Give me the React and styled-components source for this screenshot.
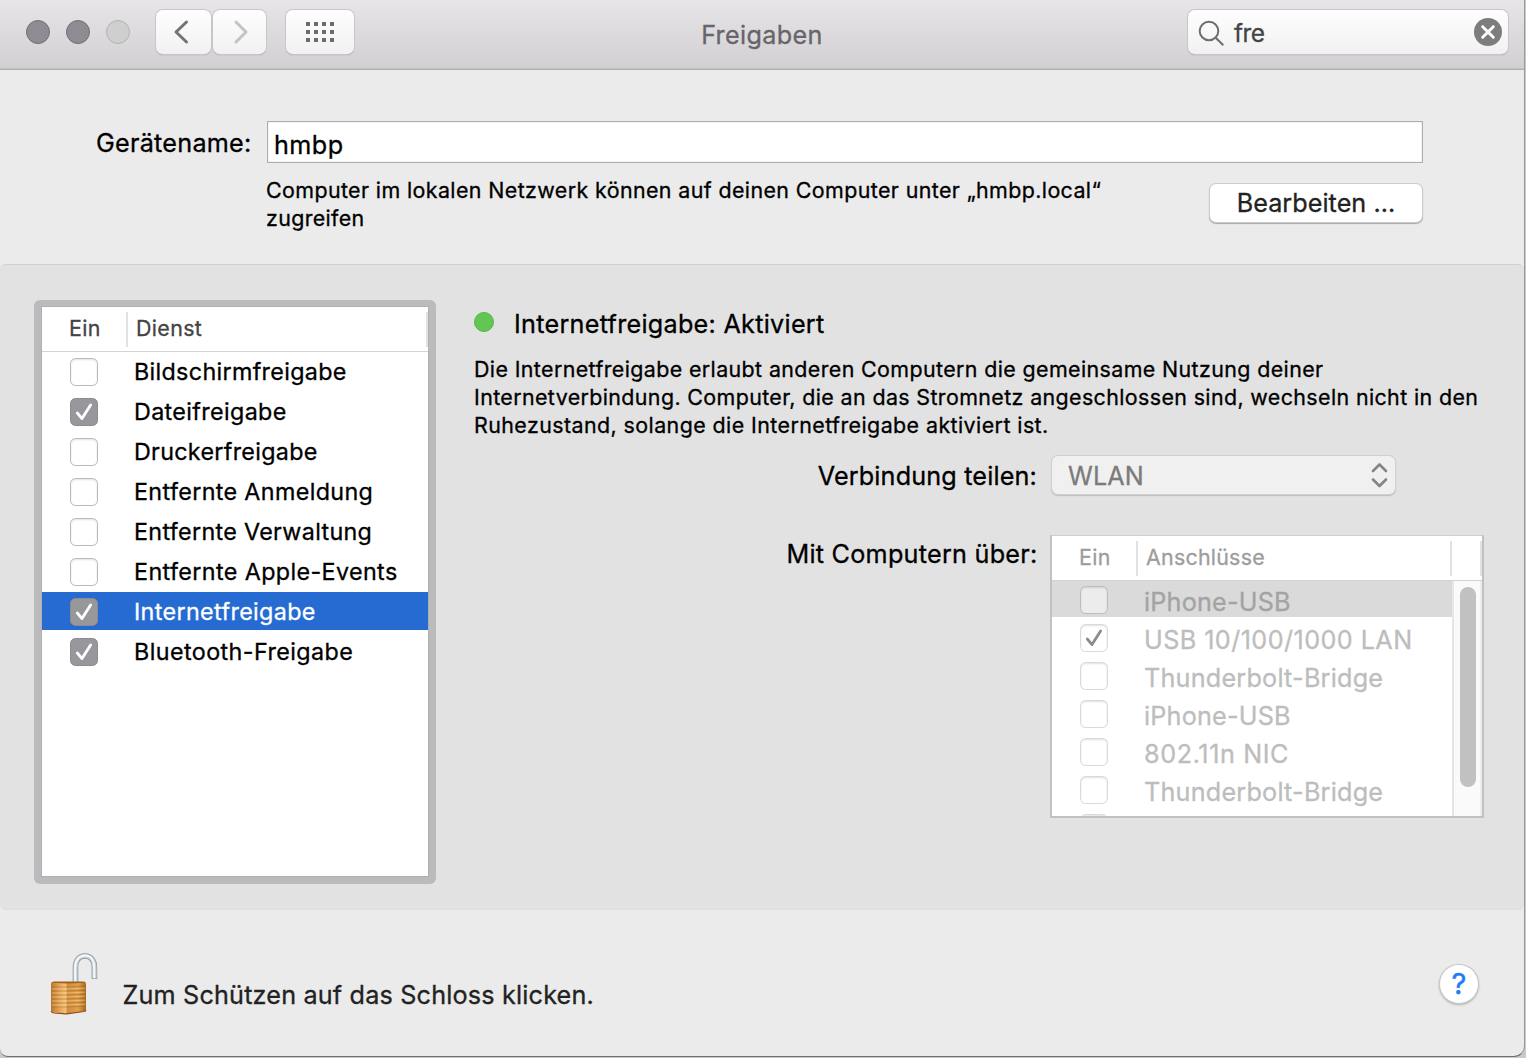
import React from 'react';
import styled, { createGlobalStyle } from 'styled-components';

const GlobalStyle = createGlobalStyle`
  * { box-sizing: border-box; }
  body {
    margin: 0;
    background: #c9c9c9;
    font-family: Inter, "Liberation Sans", sans-serif;
    color: #000;
    overflow: hidden;
  }
`;

const Window = styled.main`
  display: flex;
  flex-direction: column;
  width: 1525px;
  height: 1057px;
  background: #ebebeb;
  border-right: 1px solid #999;
  border-bottom: 1px solid #6e6e6e;
  border-radius: 0 0 11px 8px;
  overflow: hidden;
`;

const Text = styled.span`
  display: block;
  white-space: pre;
  font-size: ${(p) => p.$size || 25.2}px;
  letter-spacing: ${(p) => p.$track || 0}px;
  line-height: ${(p) => p.$line || 30}px;
  color: ${(p) => p.$color || 'inherit'};
  -webkit-text-stroke: 0.3px currentColor;
`;

/* Title bar */

const TitleBar = styled.header`
  display: grid;
  grid-template-columns: 1fr auto 1fr;
  height: 70px;
  padding: 10px 16px 0 26px;
  background: linear-gradient(#e7e5e8, #d1cfd2);
  border-bottom: 1px solid #afadb0;
  box-shadow: inset 0 -1px #c4c2c5;
  border-top-left-radius: 3px;
`;

const Controls = styled.div`
  display: flex;
  align-items: flex-start;
`;

const Lights = styled.div`
  display: flex;
  gap: 16px;
  padding-top: 10px;
  margin-right: 26px;
`;

const Light = styled.span`
  width: 24px;
  height: 24px;
  border-radius: 50%;
  background: ${(p) => (p.$off ? '#cecfce' : '#8e8c92')};
  border: 1px solid ${(p) => (p.$off ? '#b1b2b1' : '#717074')};
`;

const ToolButton = styled.button`
  display: flex;
  align-items: center;
  justify-content: center;
  width: ${(p) => p.$width}px;
  height: 44px;
  margin: 0 ${(p) => p.$gap || 0}px 0 0;
  padding: 0 ${(p) => p.$right || 0}px 0 ${(p) => p.$left || 0}px;
  border: 0;
  border-radius: 7px;
  background: linear-gradient(#fefefe, #f1f1f1);
  box-shadow: 0 0 0 1px #c8c6c9, 0 1px 1px 0 #858387;
`;

const Title = styled.h1`
  margin: 0 10px 0 0;
  padding-top: 10px;
  font-weight: 400;
`;

const Search = styled.div`
  display: flex;
  justify-self: end;
  width: 320px;
  height: 44px;
  padding-left: 10px;
  border-radius: 7px;
  background: linear-gradient(#fefefe, #f1f1f1);
  box-shadow: 0 0 0 1px #c8c6c9, 0 1px 1px 0 #858387;

  svg:first-child { margin: 10px 9px 0 0; }
  svg:last-child { margin: 8px 6px 0 auto; }
  ${Text} { padding-top: 8px; }
`;

/* Computer name */

const NameSection = styled.section`
  display: grid;
  grid-template-columns: 171px 1156px;
  height: 194px;
  padding: 51px 0 0 96px;
`;

const NameBody = styled.div``;

const Field = styled.div`
  height: 42px;
  padding: 8px 0 0 6px;
  background: #fff;
  border: 1px solid #adadad;
  box-shadow: inset 0 0 0 1px #f3f3f3;
`;

const Hint = styled.div`
  display: flex;
  justify-content: space-between;
  padding-top: 13px;
  margin-left: -1px;
`;

const EditButton = styled.button`
  height: 38px;
  width: 212px;
  margin: 8px 1px 0 0;
  padding: 0;
  border: 0;
  border-radius: 6px;
  background: #fff;
  font-family: inherit;
  color: #222;
  box-shadow: 0 0 0 1px #cbcbcb, 0 1px 1px 1px #a9a9a9;
`;

/* Sharing panel */

const Panel = styled.section`
  display: flex;
  height: 646px;
  padding: 35px 0 0 34px;
  background: #e2e2e2;
  border-top: 1px solid #d0d0d0;
  border-bottom: 1px solid #dedede;
  border-radius: 6px;
`;

const FocusRing = styled.div`
  flex: none;
  width: 402px;
  height: 584px;
  padding: 7px 8px 8px;
  border-radius: 6px;
  background: #bbbbbd;
`;

const ServiceList = styled.div`
  height: 569px;
  background: #fff;
  box-shadow: 0 0 0 1px #b0b0b2;
  overflow: hidden;
`;

const TableHead = styled.div`
  display: flex;
  align-items: center;
  height: 45px;
  border-bottom: 1px solid #d3d3d3;
  color: ${(p) => p.$color || '#444'};
`;

const HeadCell = styled.div`
  flex: ${(p) => (p.$width ? 'none' : 1)};
  width: ${(p) => p.$width || 'auto'}px;
  height: 35px;
  padding: ${(p) => p.$top ?? 2}px 0 0 ${(p) => p.$pad || 0}px;
  border-right: 2px solid #e2e2e2;
`;

const Row = styled.div`
  display: flex;
  height: ${(p) => p.$height}px;
  margin-bottom: 2px;
  padding: ${(p) => p.$top}px 0 0 28px;
  background: ${(p) => p.$fill || 'transparent'};
  color: ${(p) => p.$color};

  ${Text} { margin-left: ${(p) => p.$indent}px; }
`;

const CheckBox = styled.span`
  display: flex;
  align-items: center;
  justify-content: center;
  flex: none;
  width: 28px;
  height: 28px;
  border-radius: 5.5px;
  border: 1px solid ${(p) => (p.$on ? '#8c8b90' : p.$dim || '#b9b9b9')};
  background: ${(p) => (p.$on ? '#98979c' : p.$fill || '#fff')};
  box-shadow: ${(p) => (p.$on ? 'none' : 'inset 0 1px 2px rgba(0,0,0,.12)')};
`;

const Detail = styled.div`
  width: 1012px;
  margin-left: 38px;
  padding-top: 8px;
`;

const Status = styled.div`
  display: flex;
  align-items: flex-start;
  padding-bottom: 15px;
`;

const Dot = styled.span`
  width: 20px;
  height: 20px;
  margin: 4px 20px 0 0;
  border-radius: 50%;
  background: #62c554;
  border: 1px solid #58b54b;
`;

const Form = styled.div`
  display: grid;
  grid-template-columns: 565px 434px;
  column-gap: 11px;
  row-gap: 41px;
  padding-top: 16px;
`;

const FieldLabel = styled.div`
  display: flex;
  justify-content: flex-end;
  padding: ${(p) => p.$top}px ${(p) => p.$right}px 0 0;
`;

const Select = styled.div`
  display: flex;
  justify-content: space-between;
  width: 343px;
  height: 38px;
  margin: 1px 0 0 2px;
  padding: 5px 7px 0 16px;
  border-radius: 6px;
  background: #f0f0f0;
  box-shadow: 0 0 0 1px #d0d0d0, 0 1px 1px 1px #bdbdbd;

  svg { margin-top: 1px; }
`;

const PortTable = styled.div`
  height: 283px;
  background: #fff;
  border: 2px solid #c1c1c1;
  border-top: 1px solid #cfcfcf;
  overflow: hidden;
`;

const PortBody = styled.div`
  display: flex;
  height: 235px;
`;

const PortRows = styled.div`
  width: 400px;
  overflow: hidden;
`;

const ScrollTrack = styled.div`
  width: 30px;
  padding: 6px 0 0 6px;
  background: #fafafa;
  border-left: 2px solid #e6e6e6;
  border-right: 2px solid #ededed;
`;

const Thumb = styled.div`
  width: 16px;
  height: 200px;
  border-radius: 8px;
  background: #c1c1c1;
`;

/* Footer */

const Footer = styled.footer`
  display: flex;
  align-items: flex-start;
  padding: 42px 46px 0 50px;

  ${Text} { margin: 28px auto 0 24.5px; }
`;

const HelpButton = styled.button`
  width: 38px;
  height: 38px;
  margin-top: 13px;
  padding: 0;
  border: 0;
  border-radius: 50%;
  background: #fff;
  color: #1d7cf8;
  font: 400 29px/38px Inter, "Liberation Sans", sans-serif;
  -webkit-text-stroke: 0.5px currentColor;
  box-shadow: 0 0 0 1px #c9c9c9, 0 1px 2px 1px #b0b0b0;
`;

const Chevron = ({ flip, color }) => (
  <svg width="16" height="26" viewBox="0 0 16 26" fill="none" stroke={color} strokeWidth="3" strokeLinecap="round" strokeLinejoin="round">
    <path d={flip ? 'M3 3 13 13 3 23' : 'M13.5 3 3 13 13.5 23'} />
  </svg>
);

const DotGrid = () => (
  <svg width="28" height="20" fill="#6b6b6b" shapeRendering="crispEdges">
    {[0, 8, 16].map((y) => [0, 8, 16, 24].map((x) => <rect key={`${x}-${y}`} x={x} y={y} width="4" height="4" />))}
  </svg>
);

const Magnifier = () => (
  <svg width="27" height="27" fill="none" stroke="#6d6d6d" strokeWidth="2">
    <circle cx="11" cy="11" r="9.3" />
    <path d="M17.7 17.7 25.3 25.3" />
  </svg>
);

const ClearIcon = () => (
  <svg width="28" height="28">
    <circle cx="14" cy="14" r="14" fill="#7d7d7d" />
    <path d="M8.7 8.7 19.3 19.3M19.3 8.7 8.7 19.3" stroke="#fcfcfc" strokeWidth="3" strokeLinecap="round" />
  </svg>
);

const Check = ({ color = '#fff' }) => (
  <svg width="18" height="18" viewBox="0 0 18 18" fill="none" stroke={color} strokeWidth="2.8" strokeLinecap="round" strokeLinejoin="round">
    <path d="M2.3 10 7 15.6 15.6 2" />
  </svg>
);

const UpDown = () => (
  <svg width="17" height="26" fill="none" stroke="#858585" strokeWidth="2.6" strokeLinecap="round" strokeLinejoin="round">
    <path d="M2 9 8.5 2.5 15 9M2 17.5 8.5 24 15 17.5" />
  </svg>
);

const Padlock = () => (
  <svg width="48" height="64" viewBox="0 0 48 64">
    <defs>
      <linearGradient id="brassFront" x1="0" x2="1" y1="0" y2="0">
        <stop offset="0" stopColor="#b9782c" />
        <stop offset=".5" stopColor="#e3a252" />
        <stop offset="1" stopColor="#f6c987" />
      </linearGradient>
      <linearGradient id="brassSide" x1="0" x2="1" y1="0" y2="0">
        <stop offset="0" stopColor="#d08d3c" />
        <stop offset=".6" stopColor="#dfa04c" />
        <stop offset="1" stopColor="#a9681f" />
      </linearGradient>
    </defs>
    <path d="M25.5 30V15.5C25.5 8.2 29.4 4 35 4S44.4 8.2 44.4 15.5V27" fill="none" stroke="#89959c" strokeWidth="5.6" />
    <path d="M25.5 30V15.5C25.5 8.2 29.4 4 35 4S44.4 8.2 44.4 15.5V26.4" fill="none" stroke="#c5d0d6" strokeWidth="4.2" />
    <path d="M25.2 30V15.5C25.2 8 29.2 3.5 35 3.5S44.2 8.2 44.2 15.5V26" fill="none" stroke="#f4f8fa" strokeWidth="2" />
    <path d="M1 31.5Q1 30 3 29.7L17 30.2V61.8L3 60.6Q1 60.4 1 59Z" fill="url(#brassFront)" />
    <path d="M16.5 30.2 34 30Q36 30.2 36 32V57.5Q36 58.8 34.5 59.2L16.5 61.8Z" fill="url(#brassSide)" />
    <path d="M1.5 30.8Q3 29.6 6 29.6H33Q35 29.6 35.6 30.8L17 31.5Z" fill="#a15f1d" />
    {[35, 39, 43, 47, 51, 55].map((y) => (
      <path key={y} d={`M1 ${y}H16.5L36 ${y - 0.8}`} fill="none" stroke="#a5621b" strokeOpacity=".45" strokeWidth="1.1" />
    ))}
    {[37, 41, 45, 49, 53].map((y) => (
      <path key={y} d={`M2 ${y}H16.5L35 ${y - 0.8}`} fill="none" stroke="#ffdca3" strokeOpacity=".45" strokeWidth="1" />
    ))}
    <path d="M1 59.4Q1.5 60.7 4 61L16.5 61.9 34 59.5Q35.6 59.2 36 58" fill="none" stroke="#8f4a17" strokeWidth="1.1" />
  </svg>
);

const services = [
  { name: 'Bildschirmfreigabe', track: 0.33 },
  { name: 'Dateifreigabe', track: 0.36 },
  { name: 'Druckerfreigabe', track: 0.3 },
  { name: 'Entfernte Anmeldung', track: 0.36 },
  { name: 'Entfernte Verwaltung', track: 0.32 },
  { name: 'Entfernte Apple-Events', track: 0.39 },
  { name: 'Internetfreigabe', track: 0.36, selected: true },
  { name: 'Bluetooth-Freigabe', track: 0.42 },
];

const enabled = new Set(['Dateifreigabe', 'Internetfreigabe', 'Bluetooth-Freigabe']);

const ports = [
  { name: 'iPhone-USB', track: 0.2, selected: true },
  { name: 'USB 10/100/1000 LAN', track: 0.43, on: true },
  { name: 'Thunderbolt-Bridge', track: 0.22 },
  { name: 'iPhone-USB', track: 0.2 },
  { name: '802.11n NIC', track: 0.6 },
  { name: 'Thunderbolt-Bridge', track: 0.22 },
  { name: '', track: 0 },
];

export default function App() {
  return (
    <>
      <GlobalStyle />
      <Window>
        <TitleBar>
          <Controls>
            <Lights>
              <Light />
              <Light />
              <Light $off />
            </Lights>
            <ToolButton $width={55} $gap={2} $right={6}><Chevron color="#737373" /></ToolButton>
            <ToolButton $width={53} $gap={20} $left={3}><Chevron flip color="#c3c3c3" /></ToolButton>
            <ToolButton $width={68}><DotGrid /></ToolButton>
          </Controls>
          <Title><Text $track={0.35} $color="#676569">Freigaben</Text></Title>
          <Search>
            <Magnifier />
            <Text $size={24.4} $track={-0.5} $color="#444">fre</Text>
            <ClearIcon />
          </Search>
        </TitleBar>

        <NameSection>
          <Text $track={0.25} $line={44}>Gerätename:</Text>
          <NameBody>
            <Field><Text $track={0.44}>hmbp</Text></Field>
            <Hint>
              <div>
                <Text $size={21.4} $track={0.4} $line={28}>Computer im lokalen Netzwerk können auf deinen Computer unter „hmbp.local“</Text>
                <Text $size={21.4} $track={0.36} $line={28}>zugreifen</Text>
              </div>
              <EditButton><Text $track={0.04}>Bearbeiten ...</Text></EditButton>
            </Hint>
          </NameBody>
        </NameSection>

        <Panel>
          <FocusRing>
            <ServiceList>
              <TableHead>
                <HeadCell $width={86} $pad={27} $top={1}><Text $size={21.4} $track={0.4}>Ein</Text></HeadCell>
                <HeadCell $pad={8} $top={1}><Text $size={21.4} $track={0.36}>Dienst</Text></HeadCell>
              </TableHead>
              {services.map((s) => {
                const on = enabled.has(s.name);
                return (
                  <Row key={s.name} $height={38} $top={6} $indent={36} $fill={s.selected && '#266bd2'} $color={s.selected ? '#fff' : '#000'}>
                    <CheckBox $on={on}>{on && <Check />}</CheckBox>
                    <Text $size={23.3} $track={s.track} $line={27}>{s.name}</Text>
                  </Row>
                );
              })}
            </ServiceList>
          </FocusRing>

          <Detail>
            <Status>
              <Dot />
              <Text $track={0.27} $line={32}>Internetfreigabe: Aktiviert</Text>
            </Status>
            <Text $size={21.4} $track={0.393} $line={28}>Die Internetfreigabe erlaubt anderen Computern die gemeinsame Nutzung deiner</Text>
            <Text $size={21.4} $track={0.386} $line={28}>Internetverbindung. Computer, die an das Stromnetz angeschlossen sind, wechseln nicht in den</Text>
            <Text $size={21.4} $track={0.43} $line={28}>Ruhezustand, solange die Internetfreigabe aktiviert ist.</Text>
            <Form>
              <FieldLabel $top={6} $right={2}><Text $track={0.16}>Verbindung teilen:</Text></FieldLabel>
              <Select><Text $track={0.087} $color="#7b7b7b">WLAN</Text><UpDown /></Select>
              <FieldLabel $top={4} $right={1.5}><Text $track={0.25}>Mit Computern über:</Text></FieldLabel>
              <PortTable>
                <TableHead $color="#9d9d9d">
                  <HeadCell $width={86} $pad={27} $top={1}><Text $size={21.4} $track={0.4}>Ein</Text></HeadCell>
                  <HeadCell $width={314} $pad={8} $top={1}><Text $size={21.4} $track={0.248}>Anschlüsse</Text></HeadCell>
                  <HeadCell />
                </TableHead>
                <PortBody>
                  <PortRows>
                    {ports.map((p, i) => (
                      <Row key={i} $height={36} $top={5} $indent={36} $fill={p.selected && '#dadada'} $color={p.selected ? '#a3a3a3' : '#bdbdbd'}>
                        <CheckBox $dim={p.selected ? '#bcbcbc' : '#d9d9d9'} $fill={p.selected && '#ececec'}>{p.on && <Check color="#8c8c8c" />}</CheckBox>
                        <Text $track={p.track} $line={32}>{p.name}</Text>
                      </Row>
                    ))}
                  </PortRows>
                  <ScrollTrack><Thumb /></ScrollTrack>
                </PortBody>
              </PortTable>
            </Form>
          </Detail>
        </Panel>

        <Footer>
          <Padlock />
          <Text $track={0.178} $color="#222">Zum Schützen auf das Schloss klicken.</Text>
          <HelpButton>?</HelpButton>
        </Footer>
      </Window>
    </>
  );
}
